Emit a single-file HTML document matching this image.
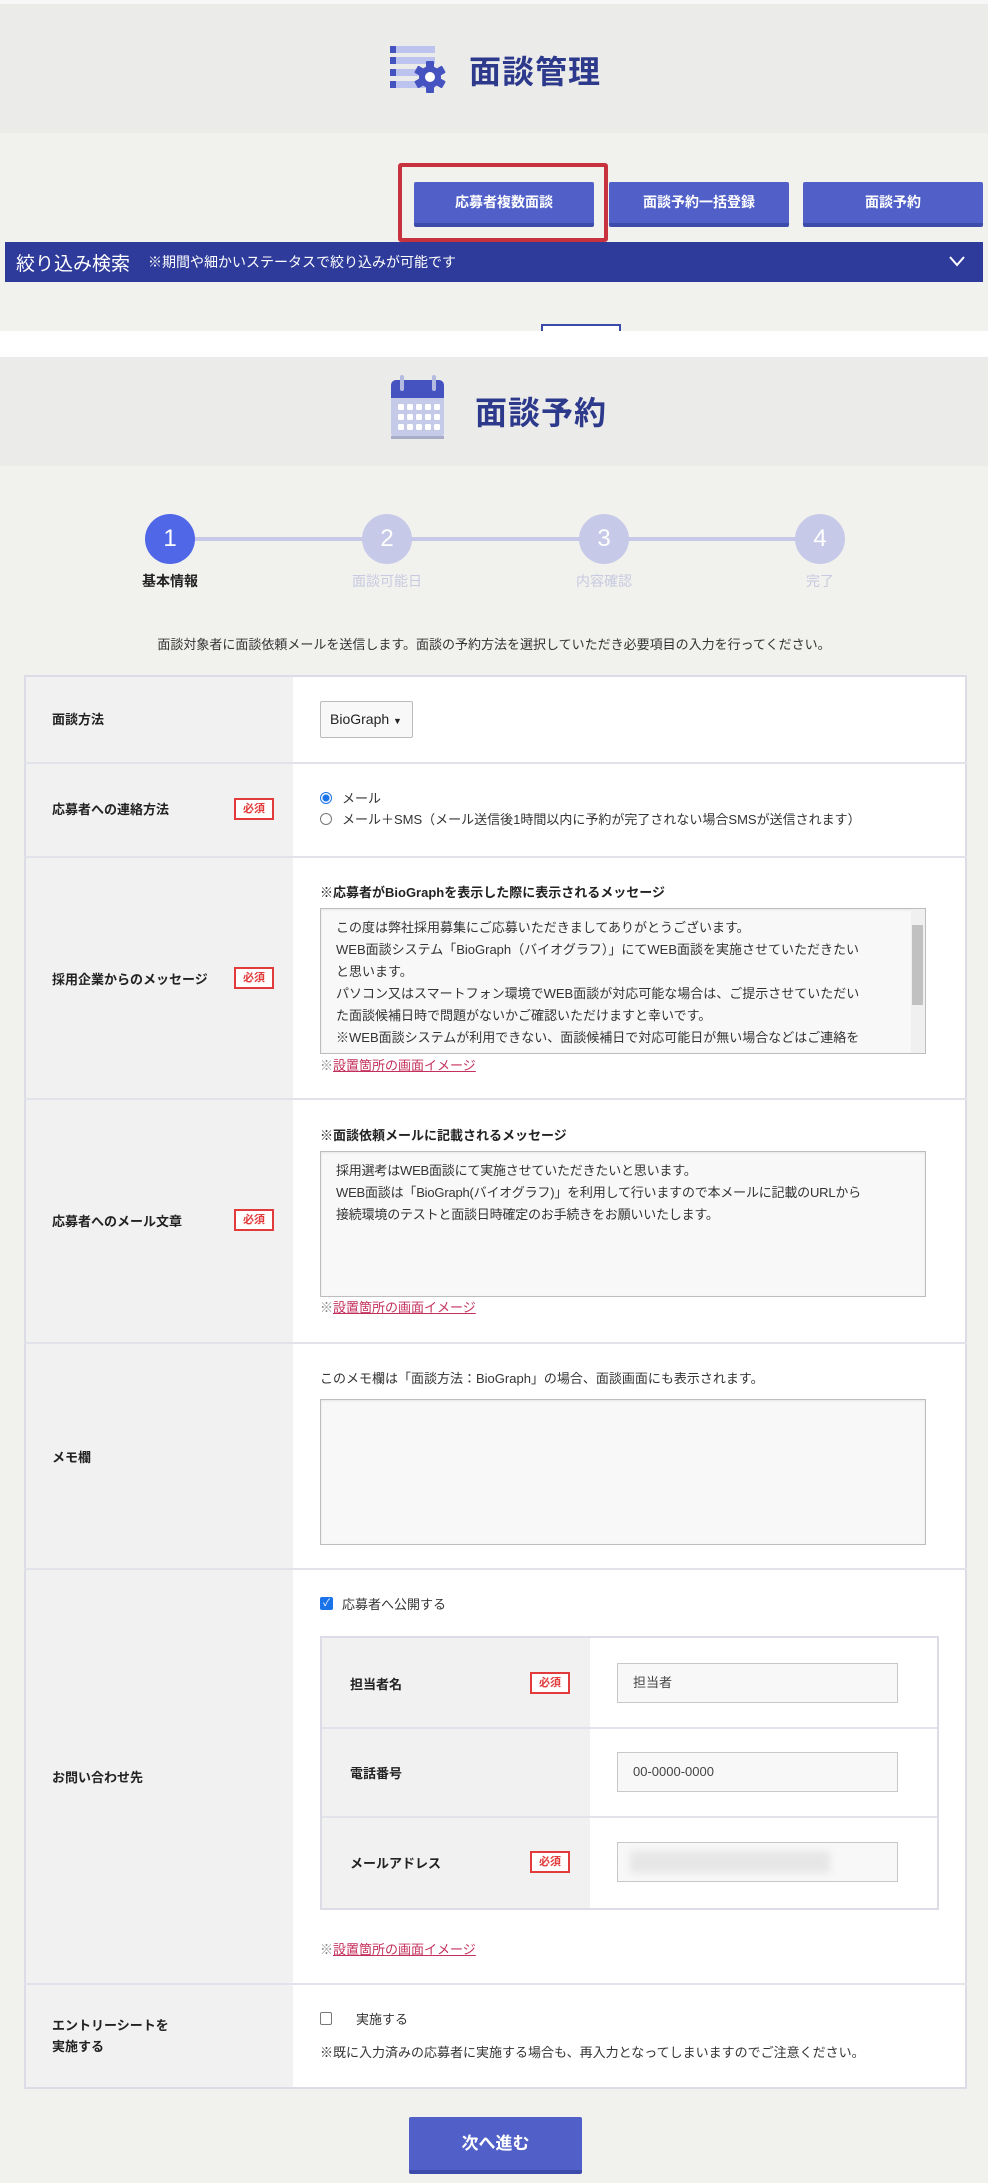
<!DOCTYPE html>
<html><head><meta charset="utf-8">
<style>
*{box-sizing:border-box;margin:0;padding:0}
body{width:988px;height:2183px;background:#f1f1ee;font-family:"Liberation Sans","Noto Sans CJK JP",sans-serif;color:#222;position:relative;overflow:hidden}
.a{position:absolute}
.hd{left:0;width:988px;background:#ebebea}
.ttl{font-size:32px;font-weight:bold;color:#2d3a8c;letter-spacing:1px}
.btn{background:#5060c8;border-bottom:4px solid #3d4bab;color:#fff;font-weight:bold;font-size:14px;text-align:center;line-height:41px;border-radius:2px}
.circ{width:50px;height:50px;border-radius:50%;color:#fff;font-size:24px;text-align:center;line-height:50px;background:#c7c9e8}
.slab{font-size:14px;color:#c8cae0;width:120px;text-align:center}
.lab{font-size:13px;font-weight:bold;color:#222}
.req{width:40px;height:22px;border:2px solid #e23b3b;color:#e23b3b;font-size:11px;font-weight:bold;text-align:center;line-height:18px;background:#fff}
.rowline{left:24px;width:943px;height:2px;background:#e2e2ea}
.ta{background:#f8f8f8;border:1px solid #bdbdbd;box-shadow:inset 0 1px 2px rgba(0,0,0,.08);font-size:13px;color:#333;line-height:22px;padding:8px 15px}
.lnk{font-size:13px;color:#888}
.lnk span{color:#c4305c;text-decoration:underline}
.inp{background:#f8f8f8;border:1px solid #c8c8c8;font-size:13px;color:#444;line-height:38px;padding-left:15px;width:281px;height:40px}
.t13{font-size:13px;color:#333}
</style></head><body>
<div class="a" style="left:0;top:0;width:988px;height:4px;background:#f7f7f7"></div>
<div class="a hd" style="top:4px;height:129px"></div>
<svg class="a" style="left:388px;top:44px" width="62" height="52" viewBox="0 0 62 52">
<g fill="#bcc3ee"><rect x="2" y="2" width="45" height="7"/><rect x="2" y="13" width="45" height="7"/><rect x="2" y="25" width="45" height="7"/><rect x="2" y="37" width="45" height="7"/></g>
<g fill="#4553c0"><rect x="2" y="2" width="6" height="7"/><rect x="2" y="13" width="6" height="7"/><rect x="2" y="25" width="6" height="7"/><rect x="2" y="37" width="6" height="7"/></g>
<g transform="translate(42,33)" fill="#4553c0">
<circle r="11"/>
<g><rect x="-4" y="-16" width="8" height="32" rx="1"/><rect x="-4" y="-16" width="8" height="32" rx="1" transform="rotate(60)"/><rect x="-4" y="-16" width="8" height="32" rx="1" transform="rotate(120)"/></g>
<circle r="5" fill="#fff"/></g>
</svg>
<div class="a ttl" style="left:469px;top:47px">面談管理</div>

<div class="a" style="left:398px;top:163px;width:210px;height:79px;border:4px solid #c8323f;border-radius:3px"></div>
<div class="a btn" style="left:414px;top:182px;width:180px;height:45px">応募者複数面談</div>
<div class="a btn" style="left:609px;top:182px;width:180px;height:45px">面談予約一括登録</div>
<div class="a btn" style="left:803px;top:182px;width:180px;height:45px">面談予約</div>
<div class="a" style="left:5px;top:242px;width:978px;height:40px;background:#2e3b9a;color:#fff">
<span class="a" style="left:11px;top:7px;font-size:19px">絞り込み検索</span>
<span class="a" style="left:143px;top:10px;font-size:14px">※期間や細かいステータスで絞り込みが可能です</span>
<svg class="a" style="left:943px;top:13px" width="18" height="12"><path d="M2 2 L9 10 L16 2" stroke="#fff" stroke-width="2" fill="none"/></svg>
</div>
<div class="a" style="left:541px;top:324px;width:80px;height:8px;border:2px solid #3a4aa8;border-bottom:none;background:#fff"></div>
<div class="a" style="left:0;top:331px;width:988px;height:26px;background:#fff"></div>
<div class="a hd" style="top:357px;height:109px"></div>
<svg class="a" style="left:390px;top:374px" width="56" height="66" viewBox="0 0 56 66">
<rect x="1" y="6" width="53" height="58" rx="5" fill="#c5cae9"/>
<path d="M1 24 V11 a5 5 0 0 1 5 -5 H49 a5 5 0 0 1 5 5 V24 Z" fill="#4553c0"/>
<rect x="1" y="62" width="53" height="3" fill="#a8acc8"/>
<rect x="10" y="1" width="4" height="16" rx="2" fill="#b4bbe0"/><rect x="42" y="1" width="4" height="16" rx="2" fill="#b4bbe0"/>
<g fill="#fff">
<rect x="8" y="30" width="6" height="6" rx="1.5"/><rect x="17" y="30" width="6" height="6" rx="1.5"/><rect x="26" y="30" width="6" height="6" rx="1.5"/><rect x="35" y="30" width="6" height="6" rx="1.5"/><rect x="44" y="30" width="6" height="6" rx="1.5"/>
<rect x="8" y="40" width="6" height="6" rx="1.5"/><rect x="17" y="40" width="6" height="6" rx="1.5"/><rect x="26" y="40" width="6" height="6" rx="1.5"/><rect x="35" y="40" width="6" height="6" rx="1.5"/><rect x="44" y="40" width="6" height="6" rx="1.5"/>
<rect x="8" y="50" width="6" height="6" rx="1.5"/><rect x="17" y="50" width="6" height="6" rx="1.5"/><rect x="26" y="50" width="6" height="6" rx="1.5"/><rect x="35" y="50" width="6" height="6" rx="1.5"/><rect x="44" y="50" width="6" height="6" rx="1.5"/>
</g></svg>
<div class="a ttl" style="left:475px;top:388px">面談予約</div>

<!-- stepper -->
<div class="a" style="left:170px;top:537px;width:650px;height:4px;background:#c7c9e8"></div>
<div class="a circ" style="left:145px;top:514px;background:#5068e8">1</div>
<div class="a circ" style="left:362px;top:514px">2</div>
<div class="a circ" style="left:579px;top:514px">3</div>
<div class="a circ" style="left:795px;top:514px">4</div>
<div class="a slab" style="left:110px;top:571px;color:#222;font-weight:bold">基本情報</div>
<div class="a slab" style="left:327px;top:571px">面談可能日</div>
<div class="a slab" style="left:544px;top:571px">内容確認</div>
<div class="a slab" style="left:760px;top:571px">完了</div>
<div class="a t13" style="left:0;width:988px;text-align:center;top:634px">面談対象者に面談依頼メールを送信します。面談の予約方法を選択していただき必要項目の入力を行ってください。</div>

<!-- table -->
<div class="a" style="left:24px;top:675px;width:943px;height:1414px;background:#fff;border:2px solid #dcdce6"></div>
<div class="a" style="left:26px;top:677px;width:267px;height:1410px;background:#f1f1f1"></div>
<div class="a rowline" style="top:762px"></div>
<div class="a rowline" style="top:856px"></div>
<div class="a rowline" style="top:1098px"></div>
<div class="a rowline" style="top:1342px"></div>
<div class="a rowline" style="top:1568px"></div>
<div class="a rowline" style="top:1983px"></div>

<div class="a lab" style="left:52px;top:709px">面談方法</div>
<div class="a" style="left:320px;top:701px;width:93px;height:37px;border:1px solid #bbb;border-radius:2px;background:#f8f8f8;font-size:14px;line-height:35px;padding-left:9px">BioGraph <span style="font-size:9px">▼</span></div>

<div class="a lab" style="left:52px;top:799px">応募者への連絡方法</div>
<div class="a req" style="left:234px;top:798px">必須</div>
<div class="a" style="left:320px;top:792px;width:12px;height:12px;border-radius:50%;border:1px solid #1a73e8;background:radial-gradient(circle,#1a73e8 3px,#fff 4px)"></div>
<div class="a t13" style="left:342px;top:788px">メール</div>
<div class="a" style="left:320px;top:813px;width:12px;height:12px;border-radius:50%;border:1px solid #777;background:#fff"></div>
<div class="a t13" style="left:342px;top:809px">メール＋SMS（メール送信後1時間以内に予約が完了されない場合SMSが送信されます）</div>

<div class="a lab" style="left:52px;top:969px">採用企業からのメッセージ</div>
<div class="a req" style="left:234px;top:967px">必須</div>
<div class="a lab" style="left:320px;top:882px">※応募者がBioGraphを表示した際に表示されるメッセージ</div>
<div class="a ta" style="left:320px;top:908px;width:606px;height:146px;overflow:hidden;padding-right:40px">この度は弊社採用募集にご応募いただきましてありがとうございます。<br>WEB面談システム「BioGraph（バイオグラフ）」にてWEB面談を実施させていただきたい<br>と思います。<br>パソコン又はスマートフォン環境でWEB面談が対応可能な場合は、ご提示させていただい<br>た面談候補日時で問題がないかご確認いただけますと幸いです。<br>※WEB面談システムが利用できない、面談候補日で対応可能日が無い場合などはご連絡を</div>
<div class="a" style="left:911px;top:909px;width:14px;height:144px;background:#f0f0f0"></div>
<div class="a" style="left:912px;top:925px;width:11px;height:80px;background:#c1c1c1"></div>
<div class="a lnk" style="left:320px;top:1055px">※<span>設置箇所の画面イメージ</span></div>

<div class="a lab" style="left:52px;top:1211px">応募者へのメール文章</div>
<div class="a req" style="left:234px;top:1209px">必須</div>
<div class="a lab" style="left:320px;top:1125px">※面談依頼メールに記載されるメッセージ</div>
<div class="a ta" style="left:320px;top:1151px;width:606px;height:146px;white-space:nowrap;letter-spacing:-0.2px">採用選考はWEB面談にて実施させていただきたいと思います。<br>WEB面談は「BioGraph(バイオグラフ)」を利用して行いますので本メールに記載のURLから<br>接続環境のテストと面談日時確定のお手続きをお願いいたします。</div>
<div class="a lnk" style="left:320px;top:1297px">※<span>設置箇所の画面イメージ</span></div>

<div class="a lab" style="left:52px;top:1447px">メモ欄</div>
<div class="a t13" style="left:320px;top:1368px">このメモ欄は「面談方法：BioGraph」の場合、面談画面にも表示されます。</div>
<div class="a ta" style="left:320px;top:1399px;width:606px;height:146px"></div>

<div class="a" style="left:320px;top:1597px;width:13px;height:13px;border-radius:2px;background:#1a73e8;color:#fff;font-size:10px;line-height:13px;text-align:center">✓</div>
<div class="a t13" style="left:342px;top:1594px">応募者へ公開する</div>
<div class="a" style="left:320px;top:1636px;width:619px;height:274px;border:2px solid #dcdce6;background:#fff"></div>
<div class="a" style="left:322px;top:1638px;width:268px;height:270px;background:#f1f1f1"></div>
<div class="a" style="left:322px;top:1727px;width:615px;height:2px;background:#e2e2ea"></div>
<div class="a" style="left:322px;top:1816px;width:615px;height:2px;background:#e2e2ea"></div>
<div class="a lab" style="left:350px;top:1674px">担当者名</div>
<div class="a req" style="left:530px;top:1672px">必須</div>
<div class="a inp" style="left:617px;top:1663px">担当者</div>
<div class="a lab" style="left:350px;top:1763px">電話番号</div>
<div class="a inp" style="left:617px;top:1752px">00-0000-0000</div>
<div class="a lab" style="left:350px;top:1853px">メールアドレス</div>
<div class="a req" style="left:530px;top:1851px">必須</div>
<div class="a inp" style="left:617px;top:1842px"></div>
<div class="a" style="left:630px;top:1851px;width:200px;height:22px;background:#e6e6e6;filter:blur(4px)"></div>
<div class="a lnk" style="left:320px;top:1939px">※<span>設置箇所の画面イメージ</span></div>
<div class="a lab" style="left:52px;top:1767px">お問い合わせ先</div>

<div class="a lab" style="left:52px;top:2015px;line-height:21px">エントリーシートを<br>実施する</div>
<div class="a" style="left:320px;top:2012px;width:12px;height:13px;border:1px solid #777;border-radius:2px;background:#fff"></div>
<div class="a t13" style="left:356px;top:2009px">実施する</div>
<div class="a t13" style="left:320px;top:2042px">※既に入力済みの応募者に実施する場合も、再入力となってしまいますのでご注意ください。</div>

<div class="a btn" style="left:409px;top:2117px;width:173px;height:57px;line-height:53px;font-size:17px">次へ進む</div>
</body></html>
